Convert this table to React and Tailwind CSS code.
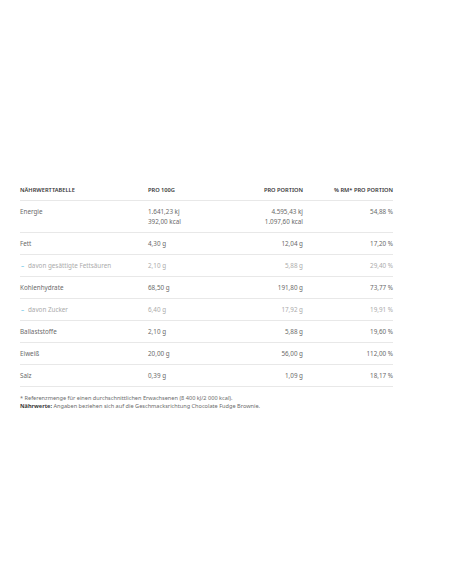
import React from 'react';

const rows = [
  { label: 'Energie', per100: ['1.641,23 kj', '392,00 kcal'], portion: ['4.595,43 kj', '1.097,60 kcal'], rm: '54,88 %' },
  { label: 'Fett', per100: ['4,30 g'], portion: ['12,04 g'], rm: '17,20 %' },
  { label: 'davon gesättigte Fettsäuren', sub: true, per100: ['2,10 g'], portion: ['5,88 g'], rm: '29,40 %' },
  { label: 'Kohlenhydrate', per100: ['68,50 g'], portion: ['191,80 g'], rm: '73,77 %' },
  { label: 'davon Zucker', sub: true, per100: ['6,40 g'], portion: ['17,92 g'], rm: '19,91 %' },
  { label: 'Ballaststoffe', per100: ['2,10 g'], portion: ['5,88 g'], rm: '19,60 %' },
  { label: 'Eiweiß', per100: ['20,00 g'], portion: ['56,00 g'], rm: '112,00 %' },
  { label: 'Salz', per100: ['0,39 g'], portion: ['1,09 g'], rm: '18,17 %' },
];

const Row = ({ row }) => (
  <div className={`flex pt-[6px] pb-[5px] leading-[10px] border-b border-[#e8e8e8] ${row.sub ? 'text-[#ababab]' : 'text-[#6a6a6a]'}`}>
    <div className="w-[128px] flex">
      {row.sub && <span className="text-[#5bbfe6] w-[8px] pl-[1px]">–</span>}
      <span>{row.label}</span>
    </div>
    <div className="w-[80px]">
      {row.per100.map((v) => <div key={v}>{v}</div>)}
    </div>
    <div className="w-[75px] text-right">
      {row.portion.map((v) => <div key={v}>{v}</div>)}
    </div>
    <div className="flex-1 text-right">{row.rm}</div>
  </div>
);

export default function App() {
  return (
    <div className="min-h-[584px] bg-white pt-[185px] pl-[20px] text-[6.3px]" style={{ fontFamily: '"Noto Sans", Lato, sans-serif' }}>
      <div className="w-[373px]">
        {/* Kopfzeile */}
        <div className="flex leading-[10px] pb-[5px] border-b border-[#e8e8e8] font-semibold text-[#3a3a3a] uppercase text-[5.7px]">
          <div className="w-[128px]">Nährwerttabelle</div>
          <div className="w-[80px]">Pro 100g</div>
          <div className="w-[75px] text-right">Pro Portion</div>
          <div className="flex-1 text-right">% RM* Pro Portion</div>
        </div>

        {rows.map((row) => <Row key={row.label} row={row} />)}

        {/* Fußnote */}
        <div className="mt-[7px] leading-[8px] text-[5.6px] text-[#6a6a6a]">
          <div>* Referenzmenge für einen durchschnittlichen Erwachsenen (8 400 kJ/2 000 kcal).</div>
          <div><span className="font-bold text-[#3a3a3a]">Nährwerte:</span> Angaben beziehen sich auf die Geschmacksrichtung Chocolate Fudge Brownie.</div>
        </div>
      </div>
    </div>
  );
}
